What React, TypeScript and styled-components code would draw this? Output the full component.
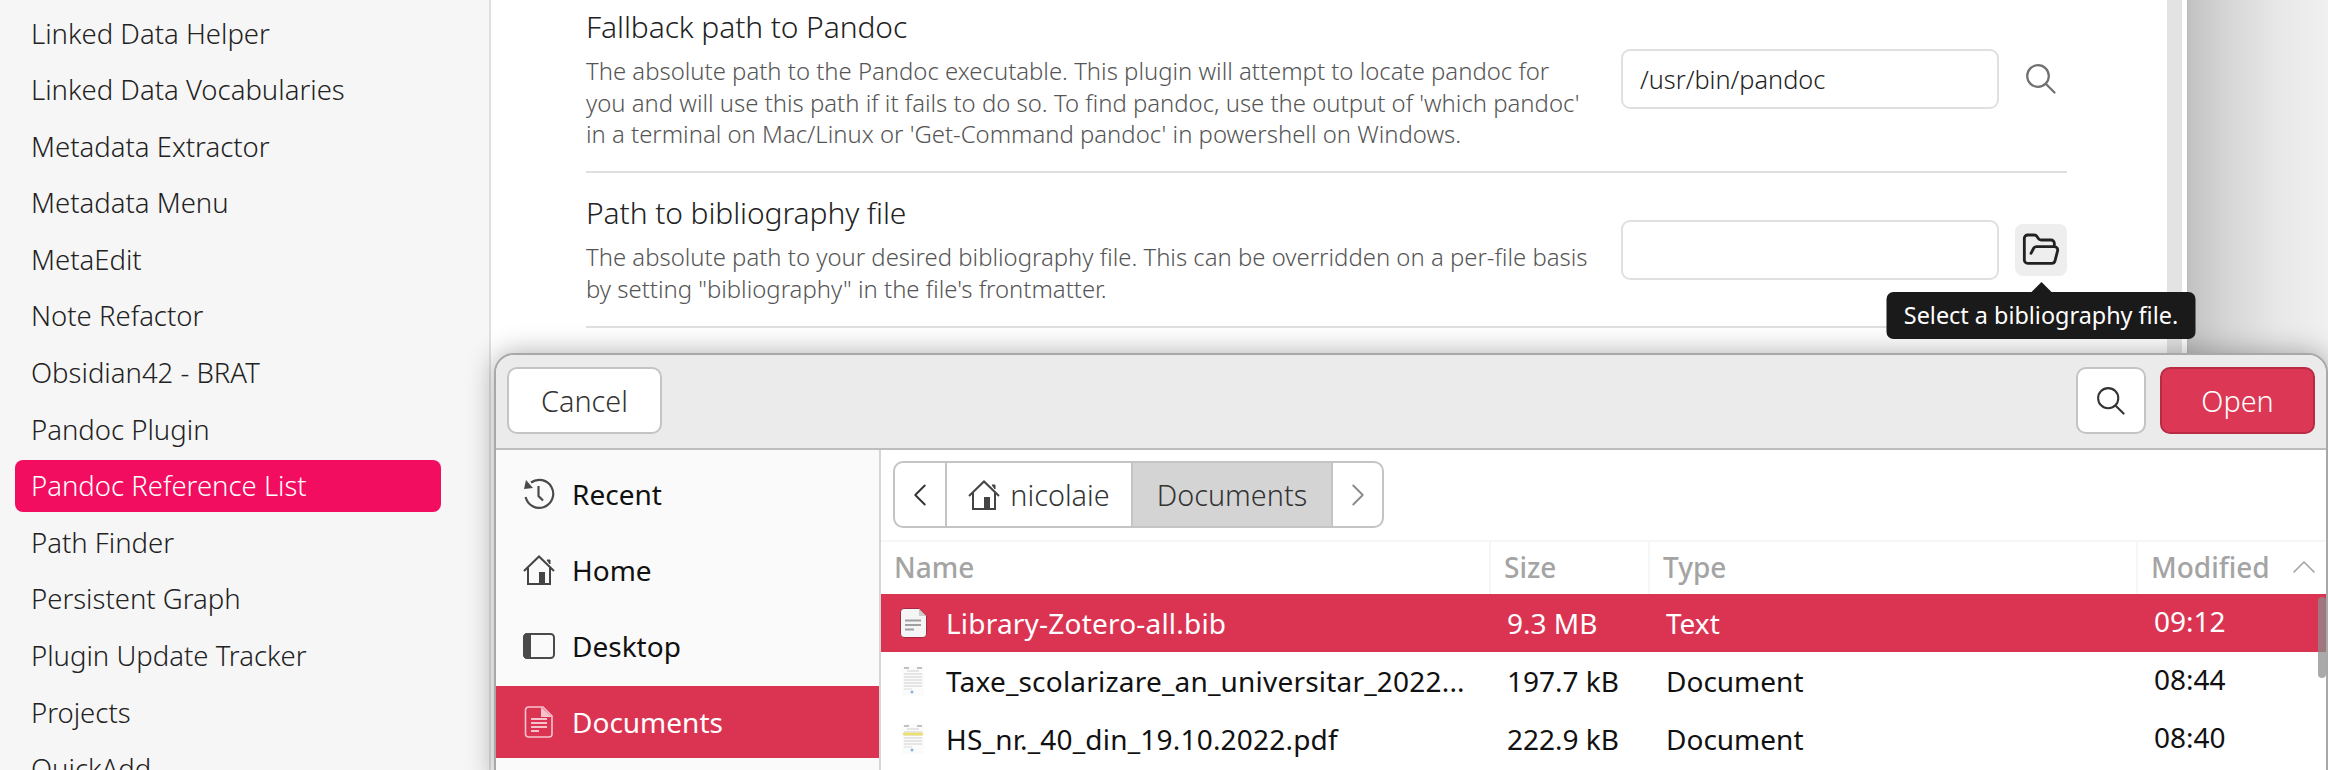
import { createGlobalStyle, styled } from 'styled-components'
import { ChevronLeft, ChevronRight, ChevronUp, FolderOpen } from 'lucide-react'

const GlobalStyle = createGlobalStyle`
  html, body {
    margin: 0;
    padding: 0;
    background: #f0f0f0;
    overflow: hidden;
  }
  * {
    box-sizing: border-box;
  }
`

const UI_FONT = `"Noto Sans", "Open Sans", sans-serif`

const Page = styled.div`
  position: relative;
  display: flex;
  width: 2328px;
  height: 770px;
  overflow: hidden;
  font-family: ${UI_FONT};
  font-weight: 300;
  color: #222;
`

/* ---------- plugin list (left) ---------- */

const PluginList = styled.nav`
  flex: 0 0 491px;
  height: 770px;
  padding: 7px 48px 0 15px;
  background: #f6f6f6;
  border-right: 2px solid #e0e0e0;
  overflow: hidden;
`

const PluginItem = styled.div<{ $active?: boolean }>`
  height: 52px;
  margin-bottom: 4.6px;
  padding-left: 16px;
  display: flex;
  align-items: center;
  border-radius: 8px;
  font-size: 27.5px;
  white-space: nowrap;
  color: ${(p) => (p.$active ? '#fff' : '#222')};
  background: ${(p) => (p.$active ? '#f20d60' : 'transparent')};
`

/* ---------- settings pane ---------- */

const SettingsPane = styled.main`
  flex: 0 0 1676px;
  padding-left: 95px;
  padding-right: 100px;
  background: #fff;
`

const SettingRow = styled.section`
  display: flex;
  align-items: center;
  justify-content: space-between;
  padding: 22px 0;
  border-bottom: 2px solid #e0e0e0;
  &:first-child {
    padding-top: 9px;
    padding-bottom: 21.5px;
  }
`

const SettingInfo = styled.div`
  width: 1010px;
`

const SettingTitle = styled.h3`
  margin: 0 0 10px;
  font-size: 30px;
  line-height: 36px;
  font-weight: 300;
  letter-spacing: -0.1px;
  color: #222;
`

const SettingDesc = styled.p`
  margin: 0;
  font-size: 23.9px;
  line-height: 31.5px;
  font-weight: 300;
  color: #555;
  white-space: nowrap;
`

const SettingControl = styled.div`
  display: flex;
  align-items: center;
  gap: 16px;
`

const PathInput = styled.div`
  width: 378px;
  height: 60px;
  padding-left: 17px;
  display: flex;
  align-items: center;
  border: 2px solid #e0e0e0;
  border-radius: 9px;
  background: #fff;
  font-size: 25.3px;
  color: #222;
`

const IconButton = styled.div<{ $hovered?: boolean }>`
  position: relative;
  width: 52px;
  height: 52px;
  display: flex;
  align-items: center;
  justify-content: center;
  border-radius: 8px;
  color: ${(p) => (p.$hovered ? '#222' : '#707070')};
  background: ${(p) => (p.$hovered ? '#eeeeee' : 'transparent')};
`

const Tooltip = styled.div`
  position: absolute;
  top: 68px;
  left: 50%;
  transform: translateX(-50%);
  width: 309px;
  height: 47px;
  display: flex;
  align-items: center;
  justify-content: center;
  border-radius: 7px;
  background: #1a1a1a;
  color: #fff;
  font-size: 23.4px;
  font-weight: 400;
  white-space: nowrap;
  z-index: 3;
  &::before {
    content: '';
    position: absolute;
    top: -10px;
    left: 50%;
    margin-left: -10px;
    border-left: 10px solid transparent;
    border-right: 10px solid transparent;
    border-bottom: 10px solid #1a1a1a;
  }
`

/* ---------- window edge and what is behind it ---------- */

const ScrollEdge = styled.div`
  flex: 0 0 21px;
  background: linear-gradient(to right, #e3e3e3 0, #e3e3e3 15px, #fff 15px, #fff 20px, #bbb 20px);
`

const Backdrop = styled.div`
  flex: 1;
  background: linear-gradient(to right, #c2c2c2 0, #d6d6d6 40px, #e8e8e8 90px, #f0f0f0 140px);
`

/* ---------- file chooser ---------- */

const FileDialog = styled.div`
  position: absolute;
  left: 494px;
  top: 353px;
  width: 1834px;
  height: 430px;
  display: flex;
  flex-direction: column;
  border: 2px solid #a8a8a8;
  border-radius: 20px 20px 0 0;
  background: #fff;
  box-shadow: 0 0 28px rgba(0, 0, 0, 0.32);
  overflow: hidden;
  z-index: 2;
`

const HeaderBar = styled.header`
  flex: 0 0 95px;
  display: flex;
  align-items: center;
  justify-content: space-between;
  padding: 0 11px 2px 11px;
  background: #ebebeb;
  border-bottom: 2px solid #bdbdbd;
`

const HeaderActions = styled.div`
  display: flex;
  gap: 14px;
`

const HeaderButton = styled.div<{ $primary?: boolean; $w: number }>`
  width: ${(p) => p.$w}px;
  height: 67px;
  display: flex;
  align-items: center;
  justify-content: center;
  border-radius: 10px;
  font-size: 28.8px;
  border: 2px solid ${(p) => (p.$primary ? '#b92b45' : '#c4c4c4')};
  background: ${(p) => (p.$primary ? '#dc3855' : '#fff')};
  color: ${(p) => (p.$primary ? '#fff' : '#333')};
`

const DialogBody = styled.div`
  flex: 1;
  display: flex;
  min-height: 0;
`

const PlacesList = styled.aside`
  flex: 0 0 385px;
  padding-top: 8px;
  background: #fafafa;
  border-right: 2px solid #d6d6d6;
`

const Place = styled.div<{ $active?: boolean }>`
  height: 72px;
  margin-bottom: 4px;
  display: flex;
  align-items: center;
  gap: 17px;
  padding-left: 27px;
  font-size: 28px;
  font-weight: 400;
  color: ${(p) => (p.$active ? '#fff' : '#111')};
  background: ${(p) => (p.$active ? '#db3453' : 'transparent')};
  svg {
    flex: 0 0 32px;
  }
`

const FilesColumn = styled.div`
  flex: 1;
  min-width: 0;
  position: relative;
  background: #fff;
`

const PathBarRow = styled.div`
  height: 92px;
  padding: 11px 12px 0;
  border-bottom: 2px solid #f6f6f6;
`

const PathBar = styled.div`
  display: inline-flex;
  height: 67px;
  border: 2px solid #c4c4c4;
  border-radius: 10px;
  overflow: hidden;
  background: #fff;
`

const PathSegment = styled.div<{ $w: number; $current?: boolean; $dim?: boolean }>`
  width: ${(p) => p.$w}px;
  display: flex;
  align-items: center;
  justify-content: center;
  gap: 10px;
  font-size: 28.8px;
  color: ${(p) => (p.$dim ? '#8a8a8a' : '#333')};
  background: ${(p) => (p.$current ? '#d4d4d4' : 'transparent')};
  border-right: 2px solid #c4c4c4;
  &:last-child {
    border-right: none;
  }
`

const FileGrid = styled.div`
  display: grid;
  grid-template-columns: 608px 159px 488px 1fr;
`

const HeadCell = styled.div<{ $first?: boolean }>`
  height: 52px;
  display: flex;
  align-items: center;
  gap: 14px;
  padding-left: 13px;
  padding-bottom: 2px;
  font-size: 28px;
  font-weight: 500;
  color: #a4a4a4;
  border-left: ${(p) => (p.$first ? 'none' : '2px solid #f6f6f6')};
`

const FileCell = styled.div<{ $selected?: boolean; $name?: boolean; $time?: boolean }>`
  height: 58px;
  display: flex;
  align-items: center;
  gap: 19px;
  padding-left: ${(p) => (p.$name ? '19px' : '18px')};
  padding-bottom: ${(p) => (p.$time ? '4px' : '0')};
  font-size: 28px;
  font-weight: 400;
  letter-spacing: ${(p) => (p.$name ? '0.2px' : '0')};
  white-space: nowrap;
  color: ${(p) => (p.$selected ? '#fff' : '#111')};
  background: ${(p) => (p.$selected ? '#db3453' : 'transparent')};
`

const ScrollThumb = styled.div`
  position: absolute;
  top: 147px;
  right: 0;
  width: 8px;
  height: 81px;
  border-radius: 4px;
  background: #8d8d8d;
  opacity: 0.75;
`

/* ---------- drawn icons ---------- */

const SearchIcon = ({ size = 30 }: { size?: number }) => (
  <svg width={size} height={size} viewBox="0 0 30 30" fill="none" stroke="currentColor" strokeWidth="2.2" strokeLinecap="round">
    <circle cx="12" cy="12" r="10.8" />
    <path d="M20 20l8.5 8.5" />
  </svg>
)

const RecentIcon = () => (
  <svg width="32" height="32" viewBox="0 0 32 32" fill="none" stroke="#4a4a4a" strokeWidth="2.2">
    <path d="M2.6 19A14 14 0 1 0 8 4.5" />
    <polygon points="3,2 1,11 10,10" fill="#4a4a4a" stroke="none" />
    <path d="M15.5 8v10l4.5 4.5" />
  </svg>
)

const HomeIcon = () => (
  <svg width="32" height="30" viewBox="0 0 32 30" fill="none" stroke="#444" strokeWidth="2">
    <path d="M1 16 16 1.5 31 16" />
    <path d="M5 13v17M27 13v17M5 29h22" />
    <path d="M24 5h3v4z" fill="#444" strokeWidth="1" />
    <rect x="16" y="17" width="6" height="13" fill="#444" stroke="none" />
  </svg>
)

const DesktopIcon = () => (
  <svg width="32" height="26" viewBox="0 0 32 26">
    <rect x="1" y="1" width="30" height="24" rx="3.5" fill="none" stroke="#4a4a4a" strokeWidth="2" />
    <path d="M4.5 0H8v26H4.5A4.5 4.5 0 0 1 0 21.5v-17A4.5 4.5 0 0 1 4.5 0z" fill="#4a4a4a" />
  </svg>
)

const DocumentOutlineIcon = () => (
  <svg width="32" height="32" viewBox="0 0 32 32" fill="none" stroke="#f6c3cd" strokeWidth="1.6">
    <path d="M5.5 1H20l9 9v18a3 3 0 0 1-3 3H5.5a3 3 0 0 1-3-3V4a3 3 0 0 1 3-3z" />
    <path d="M18 1l11 10H18z" fill="#f6c3cd" stroke="none" />
    <path d="M8 13h16M8 17h16M8 21h16M8 25h8" strokeWidth="2" />
  </svg>
)

const TextFileIcon = () => (
  <svg width="27" height="30" viewBox="0 0 27 30">
    <path d="M4 .5h15l7.5 7.5v18a3.5 3.5 0 0 1-3.500 3.500H4A3.500 3.500 0 0 1 .5 26V4A3.500 3.500 0 0 1 4 .5z" fill="#f5f5f5" stroke="#a32a42" strokeWidth="1" />
    <path d="M19 1l7 7h-7z" fill="#cdcdcd" />
    <path d="M5 12.500h16M5 17h16M5 21.500h9" stroke="#a0a0a0" strokeWidth="2" />
  </svg>
)

const PdfThumb = ({ highlight }: { highlight?: boolean }) => (
  <svg width="27" height="30" viewBox="0 0 27 30">
    <rect x="2" width="22" height="30" fill="#fbfbfb" />
    <path d="M4 2h5M17 2h5" stroke="#8a8a8a" strokeWidth="1.2" />
    <path d="M7 5h12M4 8h18M4 11h18M4 14h18M4 17h18M4 20h18" stroke="#cfcfcf" strokeWidth="1" />
    {highlight && <path d="M3 10h20" stroke="#ece26a" strokeWidth="2.5" />}
    <path d="M4 23h8" stroke="#dcdcdc" strokeWidth="1" />
    <circle cx="12" cy="26" r="1.500" fill="#8fb0d8" />
  </svg>
)

const plugins = [
  'Linked Data Helper',
  'Linked Data Vocabularies',
  'Metadata Extractor',
  'Metadata Menu',
  'MetaEdit',
  'Note Refactor',
  'Obsidian42 - BRAT',
  'Pandoc Plugin',
  'Pandoc Reference List',
  'Path Finder',
  'Persistent Graph',
  'Plugin Update Tracker',
  'Projects',
  'QuickAdd',
]

const files = [
  { name: 'Library-Zotero-all.bib', size: '9.3 MB', type: 'Text', time: '09:12', icon: <TextFileIcon />, selected: true },
  { name: 'Taxe_scolarizare_an_universitar_2022...', size: '197.7 kB', type: 'Document', time: '08:44', icon: <PdfThumb /> },
  { name: 'HS_nr._40_din_19.10.2022.pdf', size: '222.9 kB', type: 'Document', time: '08:40', icon: <PdfThumb highlight /> },
]

const App = () => {
  return (
    <Page>
      <GlobalStyle />

      <PluginList>
        {plugins.map((name) => (
          <PluginItem key={name} $active={name === 'Pandoc Reference List'}>{name}</PluginItem>
        ))}
      </PluginList>

      <SettingsPane>
        <SettingRow>
          <SettingInfo>
            <SettingTitle>Fallback path to Pandoc</SettingTitle>
            <SettingDesc>
              The absolute path to the Pandoc executable. This plugin will attempt to locate pandoc for<br />
              you and will use this path if it fails to do so. To find pandoc, use the output of 'which pandoc'<br />
              in a terminal on Mac/Linux or 'Get-Command pandoc' in powershell on Windows.
            </SettingDesc>
          </SettingInfo>
          <SettingControl>
            <PathInput>/usr/bin/pandoc</PathInput>
            <IconButton><SearchIcon /></IconButton>
          </SettingControl>
        </SettingRow>
        <SettingRow>
          <SettingInfo>
            <SettingTitle>Path to bibliography file</SettingTitle>
            <SettingDesc>
              The absolute path to your desired bibliography file. This can be overridden on a per-file basis<br />
              by setting "bibliography" in the file's frontmatter.
            </SettingDesc>
          </SettingInfo>
          <SettingControl>
            <PathInput />
            <IconButton $hovered>
              <FolderOpen size={40} strokeWidth={1.7} />
              <Tooltip>Select a bibliography file.</Tooltip>
            </IconButton>
          </SettingControl>
        </SettingRow>
      </SettingsPane>

      <ScrollEdge />
      <Backdrop />

      <FileDialog>
        <HeaderBar>
          <HeaderButton $w={155}>Cancel</HeaderButton>
          <HeaderActions>
            <HeaderButton $w={70}><SearchIcon size={28} /></HeaderButton>
            <HeaderButton $w={155} $primary>Open</HeaderButton>
          </HeaderActions>
        </HeaderBar>
        <DialogBody>
          <PlacesList>
            <Place><RecentIcon />Recent</Place>
            <Place><HomeIcon />Home</Place>
            <Place><DesktopIcon />Desktop</Place>
            <Place $active><DocumentOutlineIcon />Documents</Place>
          </PlacesList>
          <FilesColumn>
            <PathBarRow>
              <PathBar>
                <PathSegment $w={52}><ChevronLeft size={38} strokeWidth={1.2} /></PathSegment>
                <PathSegment $w={186}><HomeIcon />nicolaie</PathSegment>
                <PathSegment $w={200} $current>Documents</PathSegment>
                <PathSegment $w={49} $dim><ChevronRight size={38} strokeWidth={1.2} /></PathSegment>
              </PathBar>
            </PathBarRow>
            <FileGrid>
              <HeadCell $first>Name</HeadCell>
              <HeadCell>Size</HeadCell>
              <HeadCell>Type</HeadCell>
              <HeadCell>Modified<ChevronUp size={40} strokeWidth={1} /></HeadCell>
              {files.map((f) => [
                <FileCell key={f.name} $selected={f.selected} $name>{f.icon}{f.name}</FileCell>,
                <FileCell key={f.name + 'size'} $selected={f.selected}>{f.size}</FileCell>,
                <FileCell key={f.name + 'type'} $selected={f.selected}>{f.type}</FileCell>,
                <FileCell key={f.name + 'time'} $selected={f.selected} $time>{f.time}</FileCell>,
              ])}
            </FileGrid>
            <ScrollThumb />
          </FilesColumn>
        </DialogBody>
      </FileDialog>
    </Page>
  )
}

export default App
